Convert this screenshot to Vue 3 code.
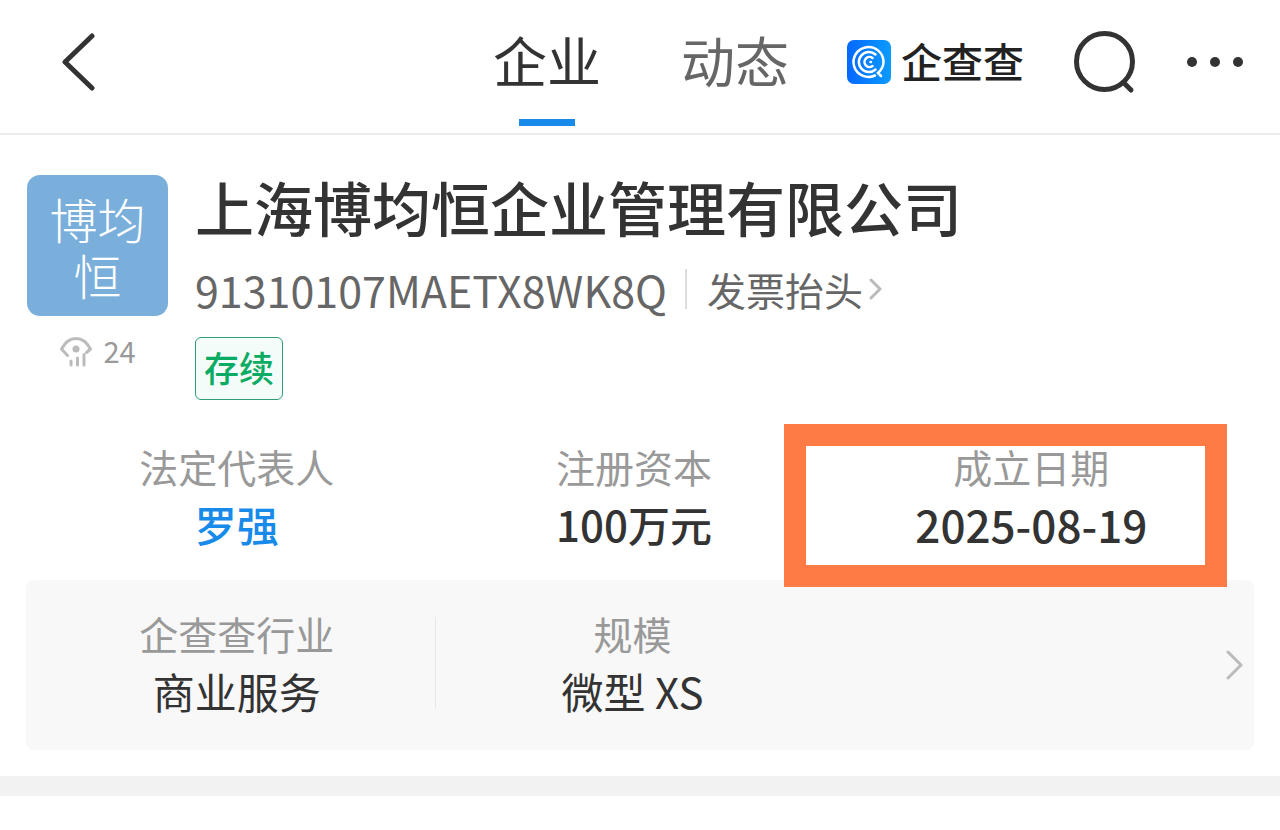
<template>
  <div class="page">
    <header class="top-bar">
      <button class="icon-btn" aria-label="返回">
        <svg width="34" height="60" viewBox="0 0 34 60">
          <path d="M31 4 L4 30 L31 56" fill="none" stroke="#333" stroke-width="5" stroke-linecap="round" stroke-linejoin="round" />
        </svg>
      </button>
      <nav class="tabs">
        <button
          v-for="tab in tabs"
          :key="tab"
          class="tab"
          :class="{ active: tab === activeTab }"
          @click="activeTab = tab"
        >
          {{ tab }}
        </button>
      </nav>
      <a class="brand" href="#">
        <svg width="44" height="44" viewBox="0 0 44 44">
          <defs>
            <linearGradient id="brandFill" x1="0" y1="0" x2="1" y2="0">
              <stop offset="0" stop-color="#0668ff" />
              <stop offset="1" stop-color="#0a9bff" />
            </linearGradient>
          </defs>
          <rect width="44" height="44" rx="7" fill="url(#brandFill)" />
          <g fill="none" stroke="#fff" stroke-width="2.5" stroke-linecap="round">
            <path d="M28 35.500 A15 15 0 1 1 36.500 22 Q36.500 28 31 33 L34 36" />
            <path d="M28.500 14.500 A10 10 0 1 0 28.500 29.500" />
            <path d="M25.500 18 A5 5 0 1 0 25.500 26" />
            <path d="M23.500 22 H24" />
          </g>
        </svg>
        <span>企查查</span>
      </a>
      <button class="icon-btn search" aria-label="搜索">
        <svg width="62" height="64" viewBox="0 0 62 64">
          <g fill="none" stroke="#333" stroke-width="5" stroke-linecap="round">
            <circle cx="30.500" cy="31.500" r="28" />
            <path d="M50 53 L57 60" />
          </g>
        </svg>
      </button>
      <button class="icon-btn" aria-label="更多">
        <svg width="56" height="12" viewBox="0 0 56 12" fill="#333">
          <circle cx="5" cy="6" r="5" />
          <circle cx="28" cy="6" r="5" />
          <circle cx="51" cy="6" r="5" />
        </svg>
      </button>
    </header>

    <main>
      <section class="company">
        <div class="aside">
          <div class="avatar">博均<br />恒</div>
          <div class="views">
            <svg width="34" height="32" viewBox="0 0 34 32">
              <g fill="none" stroke="#bbb" stroke-width="3" stroke-linecap="round" stroke-linejoin="round">
                <path d="M8.500 19.500 L2.500 13 Q8 2.500 17 2.500 T31.500 13 L27.500 16.500" />
                <path d="M12 25 V29 M18.500 22 V29 M25 18.500 V29" />
              </g>
              <circle cx="17" cy="13" r="3.500" fill="#bbb" />
            </svg>
            <span>24</span>
          </div>
        </div>
        <div class="info">
          <h1>上海博均恒企业管理有限公司</h1>
          <div class="code-row">
            <span class="code">91310107MAETX8WK8Q</span>
            <a class="invoice" href="#">
              发票抬头
              <svg width="14" height="24" viewBox="0 0 14 24">
                <path d="M2 3 L11 12 L2 21" fill="none" stroke="#bbb" stroke-width="3" stroke-linecap="round" stroke-linejoin="round" />
              </svg>
            </a>
          </div>
          <span class="status">存续</span>
        </div>
      </section>

      <dl class="facts">
        <div v-for="fact in facts" :key="fact.label" class="fact" :class="{ marked: fact.marked }">
          <dt>{{ fact.label }}</dt>
          <dd>
            <a v-if="fact.link" href="#">{{ fact.value }}</a>
            <template v-else>{{ fact.value }}</template>
          </dd>
        </div>
      </dl>

      <section class="card">
        <dl class="card-facts">
          <div v-for="item in industry" :key="item.label" class="fact">
            <dt>{{ item.label }}</dt>
            <dd>{{ item.value }}</dd>
          </div>
        </dl>
        <button class="icon-btn" aria-label="查看详情">
          <svg width="18" height="32" viewBox="0 0 18 32">
            <path d="M2 3 L15 16 L2 29" fill="none" stroke="#bbb" stroke-width="3" stroke-linecap="round" stroke-linejoin="round" />
          </svg>
        </button>
      </section>
      <div class="divider"></div>
    </main>
  </div>
</template>

<script setup>
import { ref } from 'vue'

const tabs = ['企业', '动态']
const activeTab = ref('企业')

const facts = [
  { label: '法定代表人', value: '罗强', link: true },
  { label: '注册资本', value: '100万元' },
  { label: '成立日期', value: '2025-08-19', marked: true },
]

const industry = [
  { label: '企查查行业', value: '商业服务' },
  { label: '规模', value: '微型 XS' },
]
</script>

<style>
body {
  margin: 0;
  background: #fff;
}
</style>

<style scoped>
.page {
  font-family: "Noto Sans CJK SC", sans-serif;
  color: #333;
}

button {
  padding: 0;
  border: 0;
  background: none;
  font-family: inherit;
  color: inherit;
  cursor: pointer;
}

a {
  color: inherit;
  text-decoration: none;
}

svg {
  display: block;
  flex: none;
}

.top-bar {
  display: flex;
  align-items: center;
  padding: 0 37px 10px 61px;
  height: 123px;
  border-bottom: 2px solid #ececec;
}

.tabs {
  display: flex;
  gap: 80px;
  margin-left: auto;
  align-self: stretch;
}

.tab {
  position: relative;
  padding-bottom: 4px;
  font-size: 54px;
  line-height: 116px;
  color: #666;
}

.tab.active {
  color: #333;
}

.tab.active::after {
  content: '';
  position: absolute;
  left: 50%;
  bottom: -3px;
  width: 56px;
  height: 7px;
  margin-left: -28px;
  background: #178aea;
}

.brand {
  display: flex;
  align-items: center;
  gap: 10px;
  margin: 0 50px 0 58px;
  font-size: 41px;
  font-weight: 500;
  color: #222;
}

.brand span {
  padding-bottom: 4px;
}

.search {
  margin-right: 51px;
}

.company {
  display: flex;
  gap: 27px;
  padding: 40px 27px 0;
}

.aside {
  flex: none;
  width: 141px;
}

.avatar {
  display: flex;
  align-items: center;
  justify-content: center;
  height: 141px;
  border-radius: 13px;
  background: #7aafdc;
  color: #fff;
  font-size: 48px;
  font-weight: 300;
  line-height: 56px;
  text-align: center;
}

.views {
  display: flex;
  align-items: center;
  justify-content: center;
  gap: 10px;
  margin-top: 14px;
  font-size: 29px;
  line-height: 40px;
  color: #999;
}

.views span {
  padding-bottom: 4px;
}

h1 {
  margin: 0;
  font-size: 59px;
  font-weight: 500;
  line-height: 64px;
}

.code-row {
  display: flex;
  align-items: center;
  margin: 22px 0 20px;
  line-height: 56px;
  color: #666;
}

.code {
  font-size: 43px;
}

.invoice {
  display: flex;
  align-items: center;
  gap: 6px;
  margin-left: 18px;
  padding-left: 20px;
  font-size: 39px;
  line-height: 40px;
  border-left: 2px solid #ddd;
}

.status {
  display: inline-block;
  padding: 0 8px 4px;
  border: 1px solid #2f9e74;
  border-radius: 6px;
  background: #f4fcf9;
  color: #0aab62;
  font-size: 35px;
  font-weight: 500;
  line-height: 57px;
}

dl {
  display: grid;
  grid-template-columns: repeat(3, 1fr);
  margin: 0;
}

.facts {
  padding: 42px 50px 26px 38px;
}

.fact {
  display: flex;
  flex-direction: column;
  gap: 4px;
  position: relative;
  text-align: center;
}

dt {
  font-size: 39px;
  line-height: 48px;
  color: #999;
}

dd {
  margin: 0;
  font-size: 42px;
  line-height: 60px;
}

.facts dd {
  font-weight: 500;
}

.facts .marked dd {
  font-size: 44px;
}

.facts a {
  color: #178aea;
}

.marked::after {
  content: '';
  position: absolute;
  inset: -18px 3px -33px -49px;
  z-index: 1;
  border: 22px solid #ff7b46;
  pointer-events: none;
}

.card {
  display: flex;
  align-items: center;
  margin: 0 26px 26px;
  padding: 29px 10px 29px 13px;
  border-radius: 8px;
  background: #f8f8f8;
}

.card-facts {
  flex: 1;
}

.card-facts .fact + .fact::before {
  content: '';
  position: absolute;
  left: 0;
  top: 8px;
  bottom: 12px;
  width: 1px;
  background: #e8e8e8;
}

.divider {
  height: 20px;
  background: #f2f2f2;
}
</style>
